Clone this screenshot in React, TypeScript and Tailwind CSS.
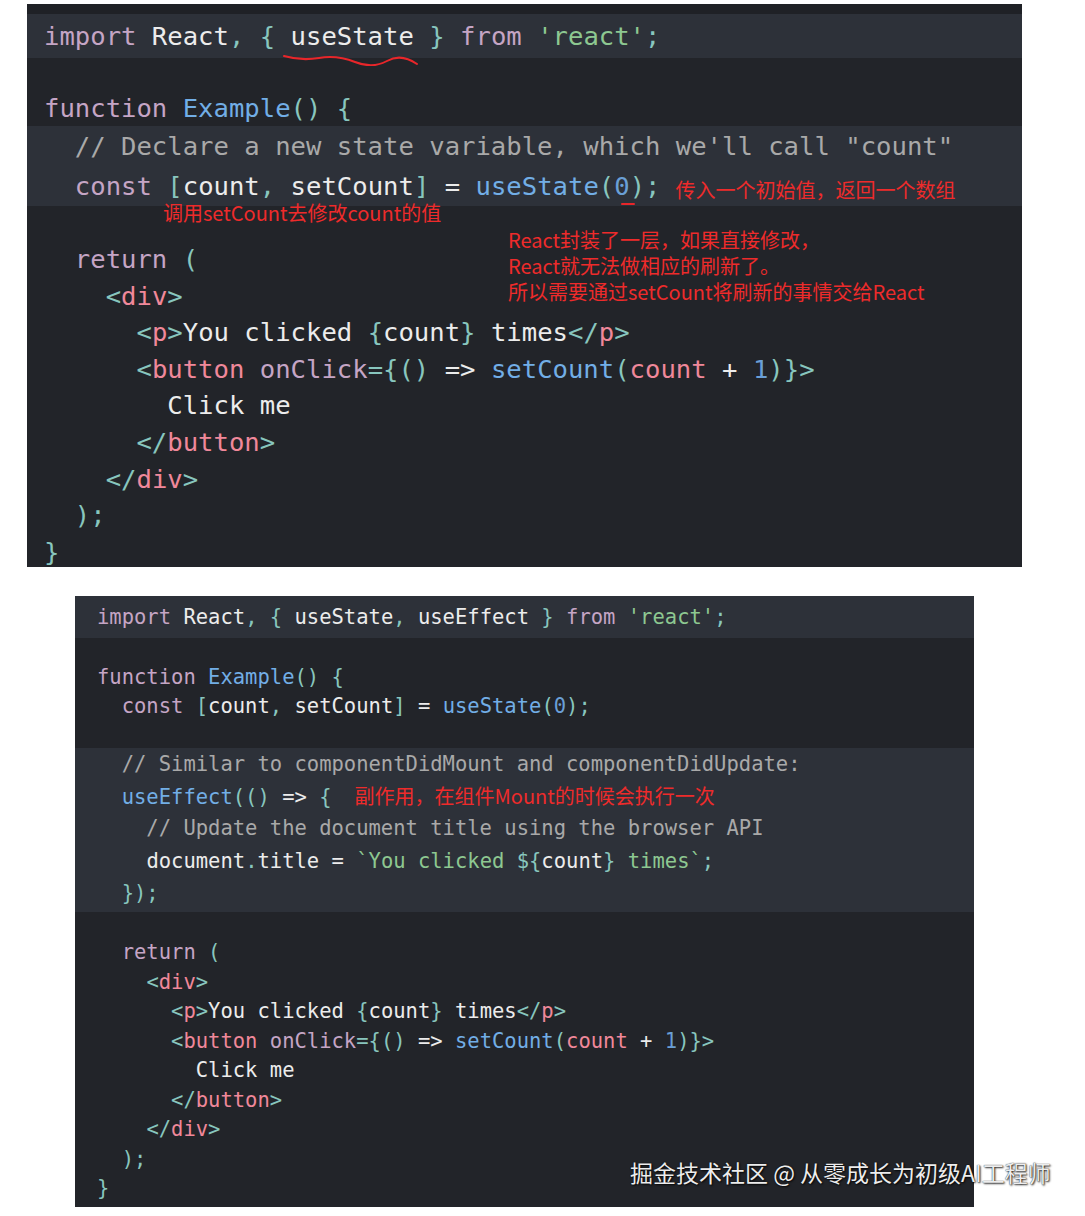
import React from "react";

const mono = "font-['DejaVu_Sans_Mono',monospace]";
const note = "font-['Noto_Sans_CJK_SC',sans-serif] text-[20px] text-[#ee2b2b] whitespace-pre";

/* token colours, roughly the old reactjs.org prism theme */
const K = ({ children }: { children: React.ReactNode }) => <span className="text-[#c5a5c5]">{children}</span>;
const P = ({ children }: { children: React.ReactNode }) => <span className="text-[#88c6be]">{children}</span>;
const F = ({ children }: { children: React.ReactNode }) => <span className="text-[#72aee6]">{children}</span>;
const T = ({ children }: { children: React.ReactNode }) => <span className="text-[#f0889a]">{children}</span>;
const S = ({ children }: { children: React.ReactNode }) => <span className="text-[#8dc891]">{children}</span>;
const N = ({ children }: { children: React.ReactNode }) => <span className="text-[#6a9fd6]">{children}</span>;
const C = ({ children }: { children: React.ReactNode }) => <span className="text-[#a9a9a9]">{children}</span>;

// one code line: fixed height, text vertically centred, spaces kept
function Line({ h, children }: { h: string; children?: React.ReactNode }) {
  return (
    <div className={`flex items-center ${h}`}>
      <span className="whitespace-pre">{children}</span>
    </div>
  );
}

function TopBlock() {
  return (
    <div className={`relative ml-[27px] mt-[4px] w-[995px] h-[563px] overflow-hidden bg-[#222429] text-[#ececec] text-[25.6px] ${mono}`}>
      <div className="h-[10px] bg-[#1f2126]" />
      <div className="bg-[#2d3139] pl-[17px]">
        <Line h="h-[44px]">
          <K>import</K> React<P>,</P> <P>{"{"}</P> useState <P>{"}"}</P> <K>from</K> <S>'react'</S><P>;</P>
        </Line>
      </div>
      <div className="pl-[17px]">
        <Line h="h-[32px]" />
        <Line h="h-[36px]">
          <K>function</K> <F>Example</F><P>()</P> <P>{"{"}</P>
        </Line>
      </div>
      <div className="bg-[#2d3139] pl-[17px]">
        <Line h="h-[40px]">
          <C>{"  // Declare a new state variable, which we'll call \"count\""}</C>
        </Line>
        <Line h="h-[40px]">
          {"  "}<K>const</K> <P>[</P>count<P>,</P> setCount<P>]</P> = <F>useState</F><P>(</P><N>0</N><P>)</P><P>;</P>
          <span className={`relative top-[3px] ml-[15px] ${note}`}>传入一个初始值，返回一个数组</span>
        </Line>
      </div>
      <div className="pl-[17px]">
        <Line h="h-[35px]" />
        <Line h="h-[36.6px]">{"  "}<K>return</K> <P>(</P></Line>
        <Line h="h-[36.6px]">{"    "}<P>&lt;</P><T>div</T><P>&gt;</P></Line>
        <Line h="h-[36.6px]">
          {"      "}<P>&lt;</P><T>p</T><P>&gt;</P>You clicked <P>{"{"}</P>count<P>{"}"}</P> times<P>&lt;/</P><T>p</T><P>&gt;</P>
        </Line>
        <Line h="h-[36.6px]">
          {"      "}<P>&lt;</P><T>button</T> <K>onClick</K><P>{"={()"}</P> =&gt; <F>setCount</F><P>(</P><T>count</T> + <N>1</N><P>{")}>"}</P>
        </Line>
        <Line h="h-[36.6px]">{"        "}Click me</Line>
        <Line h="h-[36.6px]">{"      "}<P>&lt;/</P><T>button</T><P>&gt;</P></Line>
        <Line h="h-[36.6px]">{"    "}<P>&lt;/</P><T>div</T><P>&gt;</P></Line>
        <Line h="h-[36.6px]">{"  "}<P>);</P></Line>
        <Line h="h-[36.6px]"><P>{"}"}</P></Line>
      </div>

      {/* hand-drawn notes on top of the code */}
      <svg className="absolute left-[256px] top-[48px]" width="136" height="14" viewBox="0 0 136 14">
        <path d="M1 4 Q 18 9 36 6 T 72 10 T 104 9 T 134 12" fill="none" stroke="#e8262a" strokeWidth="2" strokeLinecap="round" />
      </svg>
      <div className="absolute left-[594px] top-[199px] w-[14px] h-[2px] rounded bg-[#e8262a]" />
      <div className={`absolute left-[136px] top-[195px] leading-[28px] ${note}`}>调用setCount去修改count的值</div>
      <div className={`absolute left-[481px] top-[223px] leading-[26px] ${note}`}>
        <div className="h-[26px]">React封装了一层，如果直接修改，</div>
        <div className="h-[26px]">React就无法做相应的刷新了。</div>
        <div className="h-[26px]">所以需要通过setCount将刷新的事情交给React</div>
      </div>
    </div>
  );
}

function BottomBlock() {
  return (
    <div className={`ml-[75px] mt-[29px] w-[899px] h-[611px] overflow-hidden bg-[#222429] text-[#ececec] text-[20.5px] ${mono}`}>
      <div className="bg-[#2d3139] pl-[22px]">
        <Line h="h-[42px]">
          <K>import</K> React<P>,</P> <P>{"{"}</P> useState<P>,</P> useEffect <P>{"}"}</P> <K>from</K> <S>'react'</S><P>;</P>
        </Line>
      </div>
      <div className="pl-[22px]">
        <Line h="h-[24px]" />
        <Line h="h-[30px]"><K>function</K> <F>Example</F><P>()</P> <P>{"{"}</P></Line>
        <Line h="h-[29px]">
          {"  "}<K>const</K> <P>[</P>count<P>,</P> setCount<P>]</P> = <F>useState</F><P>(</P><N>0</N><P>)</P><P>;</P>
        </Line>
        <Line h="h-[27px]" />
      </div>
      <div className="bg-[#2d3139] pl-[22px] pb-[3px]">
        <Line h="h-[33px]"><C>{"  // Similar to componentDidMount and componentDidUpdate:"}</C></Line>
        <Line h="h-[31px]">
          {"  "}<F>useEffect</F><P>(()</P> =&gt; <P>{"{"}</P>
          <span className={`ml-[23px] ${note}`}>副作用，在组件Mount的时候会执行一次</span>
        </Line>
        <Line h="h-[33px]"><C>{"    // Update the document title using the browser API"}</C></Line>
        <Line h="h-[32px]">
          {"    "}document<P>.</P>title = <S>`You clicked </S><P>{"${"}</P>count<P>{"}"}</P><S> times`</S><P>;</P>
        </Line>
        <Line h="h-[32px]">{"  "}<P>{"});"}</P></Line>
      </div>
      <div className="pl-[22px]">
        <Line h="h-[26px]" />
        <Line h="h-[29.5px]">{"  "}<K>return</K> <P>(</P></Line>
        <Line h="h-[29.5px]">{"    "}<P>&lt;</P><T>div</T><P>&gt;</P></Line>
        <Line h="h-[29.5px]">
          {"      "}<P>&lt;</P><T>p</T><P>&gt;</P>You clicked <P>{"{"}</P>count<P>{"}"}</P> times<P>&lt;/</P><T>p</T><P>&gt;</P>
        </Line>
        <Line h="h-[29.5px]">
          {"      "}<P>&lt;</P><T>button</T> <K>onClick</K><P>{"={()"}</P> =&gt; <F>setCount</F><P>(</P><T>count</T> + <N>1</N><P>{")}>"}</P>
        </Line>
        <Line h="h-[29.5px]">{"        "}Click me</Line>
        <Line h="h-[29.5px]">{"      "}<P>&lt;/</P><T>button</T><P>&gt;</P></Line>
        <Line h="h-[29.5px]">{"    "}<P>&lt;/</P><T>div</T><P>&gt;</P></Line>
        <Line h="h-[29.5px]">{"  "}<P>);</P></Line>
        <Line h="h-[29.5px]"><P>{"}"}</P></Line>
      </div>
    </div>
  );
}

export default function App() {
  return (
    <div className="relative flex flex-col w-[1085px] h-[1216px] bg-white overflow-hidden">
      <TopBlock />
      <BottomBlock />
      {/* site watermark */}
      <div className="absolute left-[630px] top-[1156px] whitespace-pre font-['Noto_Sans_CJK_SC',sans-serif] text-[23px] leading-[32px] text-[#ededed] [text-shadow:1px_1px_2px_rgba(0,0,0,0.85),0_0_1px_rgba(0,0,0,0.9)]">
        掘金技术社区 @ 从零成长为初级AI工程师
      </div>
    </div>
  );
}
